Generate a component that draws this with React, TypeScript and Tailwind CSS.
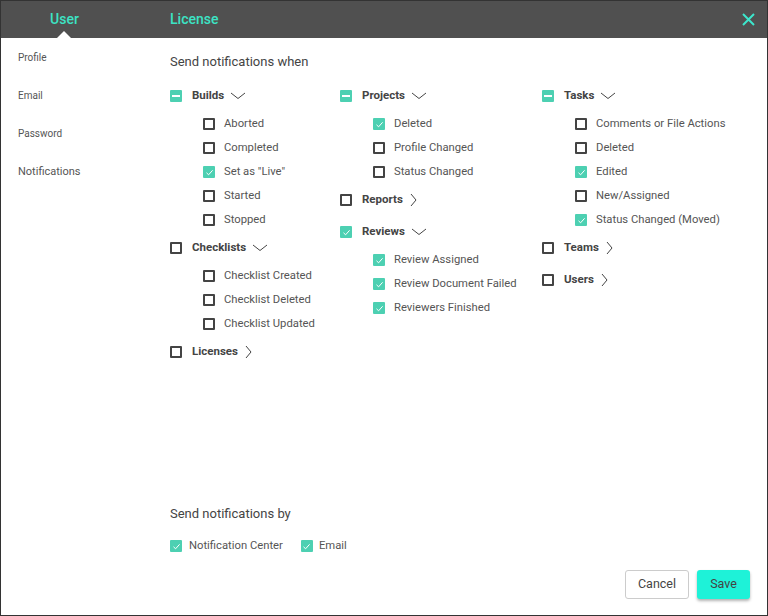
import React from 'react';

type State = 'on' | 'off' | 'mixed';

function Box({ state }: { state: State }) {
  if (state === 'off') {
    return <span className="block w-3 h-3 shrink-0 border-2 border-[#444] rounded-[1px] bg-white" />;
  }
  return (
    <span className="flex w-3 h-3 shrink-0 items-center justify-center bg-[#4dd0b2] rounded-[1px]">
      {state === 'on' ? (
        <svg width="9" height="9" viewBox="0 0 9 9" fill="none">
          <path d="M1.5 4.8 L3.6 6.8 L7.6 2.3" stroke="white" strokeWidth="1" />
        </svg>
      ) : (
        <span className="block w-[8px] h-[1.5px] bg-white" />
      )}
    </span>
  );
}

function ChevronDown() {
  return (
    <svg width="16" height="8" viewBox="0 0 16 8" fill="none" className="ml-[6px]">
      <path d="M1 1 L8 6.5 L15 1" stroke="#444" strokeWidth="1" />
    </svg>
  );
}

function ChevronRight() {
  return (
    <svg width="7" height="14" viewBox="0 0 7 14" fill="none" className="ml-[7px]">
      <path d="M1 1 L6 7 L1 13" stroke="#444" strokeWidth="1" />
    </svg>
  );
}

type Group = { label: string; state: State; open: boolean; items?: [string, boolean][] };

const columns: Group[][] = [
  [
    {
      label: 'Builds',
      state: 'mixed',
      open: true,
      items: [
        ['Aborted', false],
        ['Completed', false],
        ['Set as "Live"', true],
        ['Started', false],
        ['Stopped', false],
      ],
    },
    {
      label: 'Checklists',
      state: 'off',
      open: true,
      items: [
        ['Checklist Created', false],
        ['Checklist Deleted', false],
        ['Checklist Updated', false],
      ],
    },
    { label: 'Licenses', state: 'off', open: false },
  ],
  [
    {
      label: 'Projects',
      state: 'mixed',
      open: true,
      items: [
        ['Deleted', true],
        ['Profile Changed', false],
        ['Status Changed', false],
      ],
    },
    { label: 'Reports', state: 'off', open: false },
    {
      label: 'Reviews',
      state: 'on',
      open: true,
      items: [
        ['Review Assigned', true],
        ['Review Document Failed', true],
        ['Reviewers Finished', true],
      ],
    },
  ],
  [
    {
      label: 'Tasks',
      state: 'mixed',
      open: true,
      items: [
        ['Comments or File Actions', false],
        ['Deleted', false],
        ['Edited', true],
        ['New/Assigned', false],
        ['Status Changed (Moved)', true],
      ],
    },
    { label: 'Teams', state: 'off', open: false },
    { label: 'Users', state: 'off', open: false },
  ],
];

const widths = ['w-[170px]', 'w-[202px]', 'w-[200px]'];

export default function App() {
  return (
    <div className="w-[768px] h-[616px] border border-[#333] bg-white flex flex-col text-[#444] font-['Roboto',sans-serif] overflow-hidden">
      {/* header */}
      <div className="h-[37px] bg-[#505050] flex items-center shrink-0">
        <div className="w-[127px] h-full relative flex items-center justify-center">
          <span className="text-[14px] font-medium text-[#3ce3c4]">User</span>
          <span className="absolute bottom-0 left-[56px] w-0 h-0 border-l-[7px] border-r-[7px] border-b-[7px] border-l-transparent border-r-transparent border-b-white" />
        </div>
        <span className="ml-[42px] text-[14px] font-medium text-[#3ce3c4]">License</span>
        <button className="ml-auto mr-[12px] w-[14px] h-[14px] flex items-center justify-center">
          <svg width="13" height="13" viewBox="0 0 13 13" fill="none">
            <path d="M1 1 L12 12 M12 1 L1 12" stroke="#3de6cc" strokeWidth="2" />
          </svg>
        </button>
      </div>

      <div className="flex flex-1 min-h-0">
        {/* sidebar */}
        <div className="w-[169px] shrink-0 pl-[17px] pt-[13px] flex flex-col">
          <div className="h-[38px] text-[10px] leading-[14px] text-[#555]">Profile</div>
          <div className="h-[38px] text-[10px] leading-[14px] text-[#555]">Email</div>
          <div className="h-[38px] text-[10px] leading-[14px] text-[#555]">Password</div>
          <div className="text-[11px] leading-[14px] text-[#555]">Notifications</div>
        </div>

        {/* main */}
        <div className="flex-1 flex flex-col pr-[17px] pb-[16px]">
          <div className="pt-[16px] text-[13px] leading-[16px] text-[#444]">Send notifications when</div>
          <div className="flex mt-[10px]">
            {columns.map((col, ci) => (
              <div key={ci} className={`${widths[ci]} flex flex-col`}>
                {col.map((g) => (
                  <div key={g.label}>
                    <div className="h-8 flex items-center">
                      <Box state={g.state} />
                      <span className="ml-[10px] text-[11.5px] font-bold text-[#444]">{g.label}</span>
                      {g.open ? <ChevronDown /> : <ChevronRight />}
                    </div>
                    {g.items?.map(([t, on]) => (
                      <div key={t} className="h-6 flex items-center pl-[33px]">
                        <Box state={on ? 'on' : 'off'} />
                        <span className="ml-[9px] text-[11.25px] text-[#555]">{t}</span>
                      </div>
                    ))}
                  </div>
                ))}
              </div>
            ))}
          </div>

          <div className="mt-auto">
            <div className="text-[13px] leading-[16px] text-[#444]">Send notifications by</div>
            <div className="flex items-center mt-[16px] h-4">
              <Box state="on" />
              <span className="ml-[7px] text-[11.25px] text-[#555]">Notification Center</span>
              <span className="ml-[18px]"><Box state="on" /></span>
              <span className="ml-[6px] text-[11.25px] text-[#555]">Email</span>
            </div>
            <div className="flex justify-end gap-2 mt-[16px]">
              <button className="h-[29px] w-[64px] border border-[#ccc] rounded-[3px] bg-white text-[12.5px] text-[#444]">
                Cancel
              </button>
              <button className="h-[29px] w-[53px] rounded-[3px] bg-[#1ef2d8] text-[12.5px] text-[#444] shadow-[0_2px_3px_rgba(0,0,0,0.3)]">
                Save
              </button>
            </div>
          </div>
        </div>
      </div>
    </div>
  );
}
